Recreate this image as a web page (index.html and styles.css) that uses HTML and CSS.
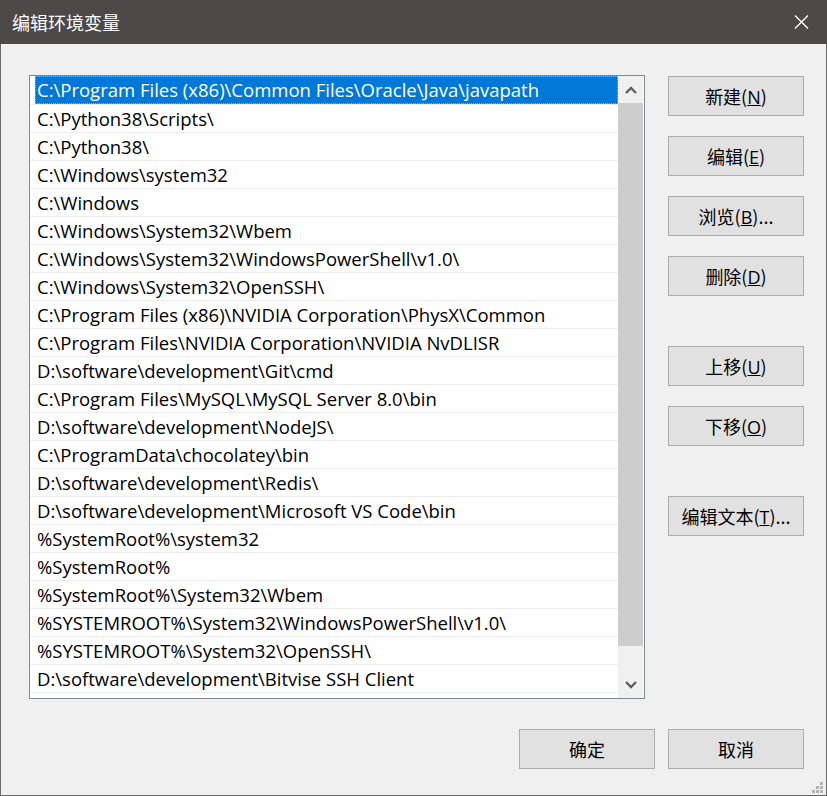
FILE: index.html
```html
<!DOCTYPE html>
<html lang="zh-CN">
<head>
<meta charset="UTF-8">
<title>编辑环境变量</title>
<link rel="stylesheet" href="styles.css">
</head>
<body>

<div class="window">
  <!-- title bar -->
  <header class="titlebar">
    <span class="title">编辑环境变量</span>
    <svg class="close" viewBox="0 0 15 14" width="15" height="14"><path d="M1 0.5L14 13.5M14 0.5L1 13.5"/></svg>
  </header>

  <div class="content">
    <div class="main">
      <!-- path list -->
      <div class="listbox">
        <ul class="rows" id="rows"></ul>
        <div class="scroll">
          <div class="arrow"><svg viewBox="0 0 12 8" width="12" height="8"><path d="M1 7L6 2L11 7"/></svg></div>
          <div class="thumb"></div>
          <div class="track"></div>
          <div class="arrow"><svg viewBox="0 0 12 8" width="12" height="8"><path d="M1 1L6 6L11 1"/></svg></div>
        </div>
      </div>

      <!-- side buttons -->
      <div class="side">
        <button class="btn">新建(<u>N</u>)</button>
        <button class="btn">编辑(<u>E</u>)</button>
        <button class="btn">浏览(<u>B</u>)...</button>
        <button class="btn">删除(<u>D</u>)</button>
        <button class="btn sep">上移(<u>U</u>)</button>
        <button class="btn">下移(<u>O</u>)</button>
        <button class="btn sep">编辑文本(<u>T</u>)...</button>
      </div>
    </div>

    <div class="footer">
      <button class="btn">确定</button>
      <button class="btn">取消</button>
    </div>
  </div>

  <svg class="grip" viewBox="0 0 11 11" width="11" height="11">
    <rect x="8" y="0" width="3" height="3"/>
    <rect x="4" y="4" width="3" height="3"/><rect x="8" y="4" width="3" height="3"/>
    <rect x="0" y="8" width="3" height="3"/><rect x="4" y="8" width="3" height="3"/><rect x="8" y="8" width="3" height="3"/>
  </svg>
</div>

<script>
/* --- PATH entries --- */
const paths=[
 "C:\\Program Files (x86)\\Common Files\\Oracle\\Java\\javapath",
 "C:\\Python38\\Scripts\\",
 "C:\\Python38\\",
 "C:\\Windows\\system32",
 "C:\\Windows",
 "C:\\Windows\\System32\\Wbem",
 "C:\\Windows\\System32\\WindowsPowerShell\\v1.0\\",
 "C:\\Windows\\System32\\OpenSSH\\",
 "C:\\Program Files (x86)\\NVIDIA Corporation\\PhysX\\Common",
 "C:\\Program Files\\NVIDIA Corporation\\NVIDIA NvDLISR",
 "D:\\software\\development\\Git\\cmd",
 "C:\\Program Files\\MySQL\\MySQL Server 8.0\\bin",
 "D:\\software\\development\\NodeJS\\",
 "C:\\ProgramData\\chocolatey\\bin",
 "D:\\software\\development\\Redis\\",
 "D:\\software\\development\\Microsoft VS Code\\bin",
 "%SystemRoot%\\system32",
 "%SystemRoot%",
 "%SystemRoot%\\System32\\Wbem",
 "%SYSTEMROOT%\\System32\\WindowsPowerShell\\v1.0\\",
 "%SYSTEMROOT%\\System32\\OpenSSH\\",
 "D:\\software\\development\\Bitvise SSH Client"
];
const ul=document.getElementById("rows");
paths.forEach((p,i)=>{
  const li=document.createElement("li");
  li.innerHTML=`<span class="cell${i===0?" selected":""}">${p}</span>`;
  ul.appendChild(li);
});
</script>
</body>
</html>
```
FILE: styles.css
```css
:root{
  --title-bg : #4b4a48;
  --frame    : #686868;
  --face     : #f0f0f0;
  --btn      : #e1e1e1;
  --btn-bd   : #adadad;
  --list-bd  : #828790;
  --select   : #0078d7;
  --line     : #ececec;
  --thumb    : #cdcdcd;
  --arrow    : #606060;
}
*{box-sizing:border-box;}
html,body{margin:0;height:100%;background:var(--face);}
body{font-family:"Open Sans","Noto Sans CJK SC",sans-serif;color:#000;}

.window{
  position:relative;width:827px;height:796px;display:flex;flex-direction:column;
  background:var(--face);border:1px solid var(--frame);border-top:none;
}

/* title bar */
.titlebar{
  height:44px;flex:none;display:flex;align-items:center;justify-content:space-between;
  margin:0 -1px;padding:0 18px 0 12px;background:var(--title-bg);
}
.title{color:#fff;font-family:"Noto Sans CJK SC",sans-serif;font-size:18px;line-height:1;}
.close{fill:none;stroke:#fff;stroke-width:1.3;}

.content{flex:1;display:flex;flex-direction:column;padding:31px 22px 26px 28px;}
.main{display:flex;gap:23px;flex:1;}

/* list */
.listbox{
  width:616px;height:624px;display:flex;padding:0 1px 0 0;
  background:#fff;border:1px solid var(--list-bd);
}
.rows{list-style:none;margin:0;padding:1px 0 0;width:588px;flex:none;}
.rows li{height:28px;border-bottom:1px solid var(--line);display:flex;}
.cell{
  flex:1;margin-left:5px;padding-left:2px;font-size:18.5px;line-height:27px;white-space:nowrap;
}
.cell.selected{
  margin-top:-1px;line-height:27px;height:28px;
  background:var(--select);color:#fff;outline:1px dotted #f0a040;outline-offset:-1px;
}

.scroll{width:25px;flex:none;display:flex;flex-direction:column;background:var(--face);}
.arrow{height:27px;display:flex;align-items:center;justify-content:center;}
.arrow svg{fill:none;stroke:var(--arrow);stroke-width:2.4;}
.thumb{height:543px;background:var(--thumb);}
.track{flex:1;}

/* buttons */
.btn{
  width:136px;height:40px;padding:0;background:var(--btn);border:1px solid var(--btn-bd);
  font-family:"Noto Sans CJK SC","Open Sans",sans-serif;font-size:18px;color:#000;cursor:pointer;
}
.btn u{font-family:"Open Sans",sans-serif;font-size:18px;}
.side{display:flex;flex-direction:column;gap:20px;padding-top:1px;}
.side .sep{margin-top:30px;}

.footer{display:flex;justify-content:flex-end;gap:13px;}

.grip{position:absolute;right:3px;bottom:2px;fill:#b4b4b4;}
```
